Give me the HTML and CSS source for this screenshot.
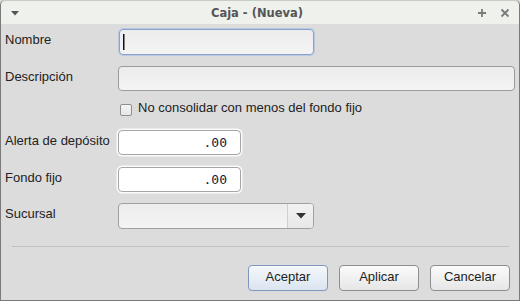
FILE: index.html
```
<!DOCTYPE html>
<html>
<head>
<meta charset="utf-8">
<link rel="stylesheet" href="styles.css">
</head>
<body>
<div class="window">
  <div class="titlebar">
    <svg class="menu-ico" width="8" height="5" viewBox="0 0 8 5"><path d="M0 0 H8 L4 4.5 Z" fill="#555"/></svg>
    <div class="title">Caja - (Nueva)</div>
    <div class="ctrls">
      <svg width="10" height="10" viewBox="0 0 10 10"><path d="M5 1 V9 M1 5 H9" stroke="#7a7a7a" stroke-width="1.8"/></svg>
      <svg width="10" height="10" viewBox="0 0 10 10"><path d="M1.5 1.5 L8.5 8.5 M8.5 1.5 L1.5 8.5" stroke="#7a7a7a" stroke-width="1.8"/></svg>
    </div>
  </div>
  <div class="content">
    <div class="row r1">
      <label class="lbl">Nombre</label>
      <div class="field focus"><span class="caret"></span></div>
    </div>
    <div class="row r2">
      <label class="lbl">Descripción</label>
      <div class="field wide"></div>
    </div>
    <div class="row r3">
      <span class="check"></span>
      <span class="chk-text">No consolidar con menos del fondo fijo</span>
    </div>
    <div class="row r4">
      <label class="lbl">Alerta de depósito</label>
      <div class="num">.00</div>
    </div>
    <div class="row r5">
      <label class="lbl">Fondo fijo</label>
      <div class="num">.00</div>
    </div>
    <div class="row r6">
      <label class="lbl">Sucursal</label>
      <div class="combo">
        <div class="combo-txt"></div>
        <div class="combo-btn"><svg width="10" height="6" viewBox="0 0 10 6"><path d="M0 0 H10 L5 5.5 Z" fill="#333"/></svg></div>
      </div>
    </div>
    <div class="sep"></div>
    <div class="buttons">
      <button class="btn default">Aceptar</button>
      <button class="btn">Aplicar</button>
      <button class="btn">Cancelar</button>
    </div>
  </div>
</div>
</body>
</html>
```
FILE: styles.css
```
* { box-sizing: border-box; }
html, body { margin: 0; padding: 0; background: #dcdcdc; }
body { font-family: "Liberation Sans", Arial, sans-serif; font-size: 13px; color: #222; }
.window {
  width: 520px; height: 301px;
  border: 1px solid #7a7a7a; border-top: none;
  border-radius: 5px 5px 0 0;
  background: #dcdcdc;
  overflow: hidden;
  display: flex; flex-direction: column;
}
.titlebar {
  height: 24px; flex: none;
  background: #eef1ec;
  border-top: 1px solid #c8ccc6;
  border-radius: 5px 5px 0 0;
  display: flex; align-items: center;
  position: relative;
  padding: 0 9px 0 10px;
}
.menu-ico { flex: none; margin-top: 1px; }
.title {
  flex: 1; text-align: center;
  font-family: "DejaVu Sans", sans-serif; font-weight: bold; font-size: 11.5px;
  color: #555; padding-left: 18px;
}
.ctrls { display: flex; gap: 13px; flex: none; align-items: center; }
.content { flex: 1; display: flex; flex-direction: column; padding: 0 0 0 4px; }
.row { display: flex; align-items: flex-start; }
.lbl { width: 113px; flex: none; padding-top: 3px; line-height: 16px; color: #222; }
.r1 { margin-top: 5px; height: 26px; }
.r2 { margin-top: 11px; height: 25px; }
.r3 { margin-top: 9px; height: 16px; align-items: center; padding-left: 115px; }
.r4 { margin-top: 14px; height: 25px; }
.r5 { margin-top: 12px; height: 25px; }
.r6 { margin-top: 11px; height: 26px; }
.field {
  height: 100%; width: 196px;
  border: 1px solid #9c9c9c; border-radius: 4px;
  background: linear-gradient(#ececec, #f4f4f4);
  position: relative;
}
.field.wide { width: 397px; margin-left: 0; }
.field.focus {
  border-color: #88a2cc;
  box-shadow: 0 0 0 1px #b9c8e0;
  width: 195px;
  margin-left: 1px;
}
.caret {
  position: absolute; left: 3px; top: 4px;
  width: 1px; height: 16px; background: #111;
  box-shadow: 0.5px 0 0 #111;
}
.check {
  width: 12px; height: 12px; flex: none;
  border: 1px solid #8f8f8f; border-radius: 2px;
  background: linear-gradient(#f4f4f4, #e6e6e6);
  margin-top: 3px;
}
.chk-text { margin-left: 6px; line-height: 16px; }
.num {
  width: 123px; height: 100%;
  border: 1px solid #a6a6a6; border-radius: 4px;
  box-shadow: 0 0 0 1.5px #fafafa;
  background: #fff;
  font-family: "DejaVu Sans Mono", monospace; font-size: 13px; color: #102040;
  text-align: right; padding-right: 13px; line-height: 23px;
  margin-left: 0;
}
.combo {
  width: 196px; height: 100%; display: flex;
  border: 1px solid #a0a0a0; border-radius: 4px;
  background: linear-gradient(#ececec, #f4f4f4);
  overflow: hidden;
}
.combo-txt { flex: 1; }
.combo-btn {
  width: 26px; flex: none; border-left: 1px solid #cfcfcf;
  display: flex; align-items: center; justify-content: center;
  background: linear-gradient(#f2f2f2, #e8e8e8);
}
.sep { margin: 17px 10px 0 7px; height: 1px; background: #c0c0c0; flex: none; }
.buttons { display: flex; justify-content: flex-end; gap: 11px; margin-top: 18px; padding-right: 9px; }
.btn {
  width: 80px; height: 26px;
  font-family: "Liberation Sans", Arial, sans-serif; font-size: 13px; color: #222;
  border: 1px solid #8e8e8e; border-radius: 4px;
  background: linear-gradient(#fbfbfb, #e6e6e6);
  padding: 0 0 4px 0;
}
.btn.default {
  border-color: #7f97bf;
  background: linear-gradient(#f5f8fc, #dbe4ef);
}
```
